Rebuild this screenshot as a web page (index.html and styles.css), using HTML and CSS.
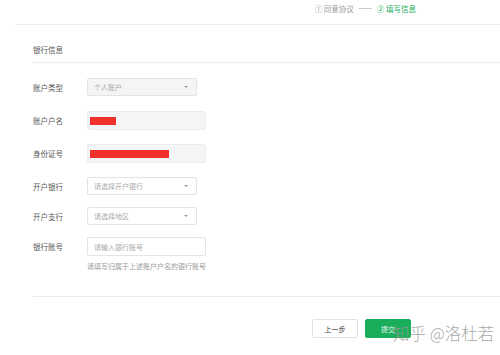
FILE: index.html
```html
<!DOCTYPE html>
<html lang="zh-CN">
<head>
    <meta charset="UTF-8">
    <title>银行信息</title>
    <link rel="stylesheet" href="styles.css">
</head>
<body>
    <div class="steps">
        <span class="step">① 同意协议</span>
        <span class="step-line"></span>
        <span class="step current">② 填写信息</span>
    </div>

    <div class="page">
        <div class="section-title">银行信息</div>

        <div class="form">
            <div class="row first">
                <label>账户类型</label>
                <div class="select disabled"><span>个人账户</span><i class="caret"></i></div>
            </div>
            <div class="row wide">
                <label>账户户名</label>
                <div class="input filled"><span class="mask" style="width:26px"></span></div>
            </div>
            <div class="row wide">
                <label>身份证号</label>
                <div class="input filled"><span class="mask" style="width:79px"></span></div>
            </div>
            <div class="row">
                <label>开户银行</label>
                <div class="select"><span>请选择开户银行</span><i class="caret"></i></div>
            </div>
            <div class="row">
                <label>开户支行</label>
                <div class="select"><span>请选择地区</span><i class="caret"></i></div>
            </div>
            <div class="row tall">
                <label>银行账号</label>
                <div class="field">
                    <div class="input"><span>请输入银行账号</span></div>
                    <div class="hint">请填写归属于上述账户户名的银行账号</div>
                </div>
            </div>
        </div>

        <div class="actions">
            <button class="btn">上一步</button>
            <button class="btn primary">提交</button>
        </div>
    </div>

    <div class="watermark">知乎 @洛杜若</div>
</body>
</html>
```

FILE: styles.css
```css
body {
    margin: 0;
    background: #fff;
    font-family: "Noto Sans CJK SC", "Liberation Sans", sans-serif;
    color: #555;
    width: 500px;
    height: 355px;
    overflow: hidden;
    position: relative;
}
.steps {
    margin-left: 15px;
    border-bottom: 1px solid #eeeeee;
    display: flex;
    align-items: center;
    justify-content: flex-end;
    padding-right: 84px;
    padding-bottom: 8px;
    height: 16px;
    font-size: 7.5px;
    color: #9a9a9a;
}
.step-line {
    width: 13px;
    border-top: 1px solid #ccc;
    margin: 0 5px;
}
.step.current {
    color: #1aad5a;
}
.page {
    padding-left: 33px;
}
.section-title {
    font-size: 7.5px;
    color: #555;
    padding-top: 19px;
    height: 18px;
    border-bottom: 1px solid #ececec;
}
.form {
    padding-top: 15px;
}
.row {
    display: flex;
    align-items: center;
    height: 18px;
    margin-bottom: 12px;
}
.row.first {
    margin-bottom: 15px;
}
.row.wide {
    height: 19px;
    margin-bottom: 14px;
}
.row label {
    width: 54px;
    font-size: 7.5px;
    color: #555;
}
.select, .input {
    box-sizing: border-box;
    height: 18px;
    border: 1px solid #e4e4e4;
    border-radius: 2px;
    display: flex;
    align-items: center;
    padding-left: 6px;
    font-size: 7px;
    color: #aaa;
    background: #fff;
}
.select {
    width: 110px;
    justify-content: space-between;
    padding-right: 8px;
}
.select.disabled {
    background: #f5f5f5;
}
.caret {
    width: 0;
    height: 0;
    border-left: 2px solid transparent;
    border-right: 2px solid transparent;
    border-top: 2px solid #999;
}
.input {
    width: 119px;
    height: 19px;
}
.input.filled {
    background: #f4f5f7;
    border-color: #ececec;
    padding-left: 2px;
}
.mask {
    display: block;
    height: 8px;
    background: #f0312e;
}
.row.tall {
    align-items: flex-start;
    height: auto;
}
.row.tall label {
    line-height: 19px;
}
.hint {
    font-size: 7px;
    color: #999;
    margin-top: 5px;
}
.actions {
    margin-top: 25px;
    border-top: 1px solid #ececec;
    display: flex;
    justify-content: flex-end;
    gap: 7px;
    padding-top: 22px;
    padding-right: 89px;
}
.btn {
    width: 46px;
    height: 19px;
    border: 1px solid #e2e2e2;
    border-radius: 2px;
    background: #fff;
    font-family: "Noto Sans CJK SC", sans-serif;
    font-size: 7px;
    color: #333;
    padding: 0;
}
.btn.primary {
    background: #1aad5a;
    border-color: #1aad5a;
    color: #e8f7ee;
}
.watermark {
    position: absolute;
    left: 393px;
    top: 321px;
    white-space: nowrap;
    font-size: 16.5px;
    line-height: 24px;
    color: rgba(150, 150, 150, 0.85);
    font-family: "Noto Sans CJK SC", sans-serif;
    font-weight: 300;
}
```
